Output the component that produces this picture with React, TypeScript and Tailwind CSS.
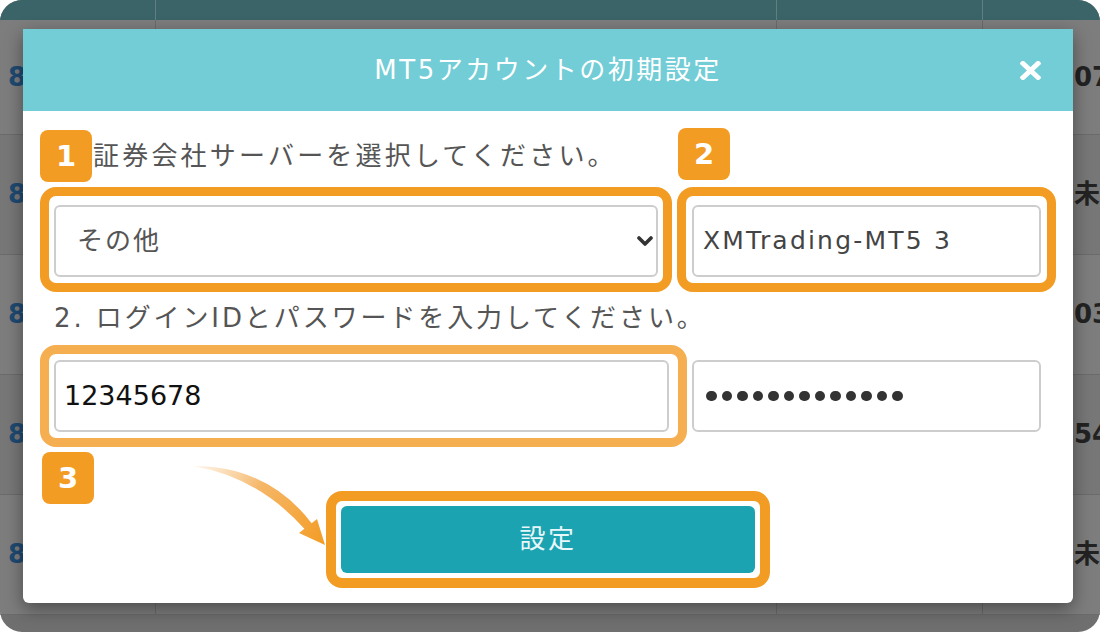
import React from "react";

const ROWS = [
  { left: "82", right: "07:14", tone: "bg-[#7d7d7d]" },
  { left: "83", right: "未決済", tone: "bg-[#777777]" },
  { left: "84", right: "03:52", tone: "bg-[#7d7d7d]" },
  { left: "85", right: "54:09", tone: "bg-[#777777]" },
  { left: "86", right: "未決済", tone: "bg-[#7d7d7d]" },
];

const Badge = ({ n }: { n: string }) => (
  <div className="w-[52px] h-[52px] shrink-0 rounded-[8px] bg-[#f39c24] flex items-center justify-center text-white font-bold text-[29px] leading-none font-['DejaVu_Sans',sans-serif]">
    {n}
  </div>
);

const Dots = ({ count }: { count: number }) => (
  <div className="flex gap-[5px]">
    {Array.from({ length: count }).map((_, i) => (
      <span key={i} className="block w-[10.5px] h-[10.5px] rounded-full bg-[#333333]" />
    ))}
  </div>
);

export default function App() {
  return (
    <div className="w-[1100px] h-[632px] bg-white font-['DejaVu_Sans','Noto_Sans_CJK_JP',sans-serif]">
      <div className="relative w-full h-full rounded-[22px] overflow-hidden bg-[#6f6f6f]">
        {/* table under the overlay */}
        <div className="flex h-[20px] bg-[#3a6467]">
          <div className="w-[156px] border-r border-[#5f7f81]" />
          <div className="w-[621px] border-r border-[#5f7f81]" />
          <div className="w-[206px] border-r border-[#5f7f81]" />
          <div className="flex-1" />
        </div>
        {ROWS.map((r, i) => (
          <div key={i} className={`flex border-b border-[#6b6b6b] ${r.tone} ${i === 0 ? "h-[115px]" : "h-[120px]"}`}>
            <div className="w-[156px] border-r border-[#6b6b6b] flex items-center pl-[8px] text-[26px] font-bold text-[#1f4a72]">
              {r.left}
            </div>
            <div className="w-[621px] border-r border-[#6b6b6b]" />
            <div className="w-[206px] border-r border-[#6b6b6b]" />
            <div className="flex-1 flex items-center pl-[91px] whitespace-nowrap overflow-hidden text-[26px] font-bold text-[#222222]">
              {r.right}
            </div>
          </div>
        ))}

        {/* dialog */}
        <div className="absolute left-[23px] top-[29px] w-[1050px] rounded-b-[6px] bg-white shadow-[0_6px_18px_rgba(0,0,0,0.4)]">
          <div className="grid grid-cols-[1fr_auto_1fr] items-center h-[82px] bg-[#72cdd6]">
            <div />
            <h2 className="text-white text-[26px] tracking-[2.5px] font-normal">MT5アカウントの初期設定</h2>
            <div className="flex justify-end pr-[32px]">
              <svg width="21" height="19" viewBox="0 0 21 19">
                <path d="M3 2.5 L18 16.5 M18 2.5 L3 16.5" stroke="white" strokeWidth="5" strokeLinecap="square" />
              </svg>
            </div>
          </div>

          <div className="px-[17px] pt-[19px]">
            <div className="grid grid-cols-[637px_379px]">
              <div className="flex items-center h-[52px]">
                <Badge n="1" />
                <span className="ml-[1px] whitespace-nowrap text-[26px] tracking-[3.2px] text-[#555555]">証券会社サーバーを選択してください。</span>
              </div>
              <div className="pl-[1px] -mt-[2px]">
                <Badge n="2" />
              </div>

              <div className="mt-[5px] w-[632px] border-[9px] border-[#f39c24] rounded-[16px] bg-white pt-[9px] px-[5px] pb-[6px]">
                <div className="h-[72px] rounded-[6px] border-2 border-[#cdcdcd] flex items-center pl-[21px] pr-[3px]">
                  <span className="flex-1 text-[26px] tracking-[2px] text-[#555555]">その他</span>
                  <svg width="16" height="11" viewBox="0 0 16 11">
                    <path d="M2 2 L8 8 L14 2" fill="none" stroke="#333333" strokeWidth="3.6" strokeLinecap="round" strokeLinejoin="round" />
                  </svg>
                </div>
              </div>
              <div className="mt-[5px] w-[379px] border-[9px] border-[#f39c24] rounded-[16px] bg-white pt-[9px] px-[6px] pb-[6px]">
                <div className="h-[72px] rounded-[6px] border-2 border-[#cdcdcd] flex items-center pl-[9px]">
                  <span className="text-[25px] tracking-[2.2px] text-[#444444]">XMTrading-MT5 3</span>
                </div>
              </div>
            </div>

            <div className="h-[53px] flex items-center pl-[14px]">
              <span className="whitespace-nowrap text-[26px] tracking-[2.9px] text-[#555555]">2. ログインIDとパスワードを入力してください。</span>
            </div>

            <div className="flex items-center">
              <div className="w-[647px] border-[9px] border-[#f5ae50] rounded-[16px] bg-white pt-[6px] pl-[5px] pr-[9px] pb-[6px]">
                <div className="h-[72px] rounded-[6px] border-2 border-[#cdcdcd] flex items-center pl-[8px]">
                  <span className="text-[27px] text-[#111111]">12345678</span>
                </div>
              </div>
              <div className="ml-[5px] w-[349px] h-[72px] rounded-[6px] border-2 border-[#cdcdcd] flex items-center pl-[12px]">
                <Dots count={13} />
              </div>
            </div>

            <div className="relative flex justify-center pt-[44px] pb-[15px]">
              <div className="absolute left-[2px] top-[5px]">
                <Badge n="3" />
              </div>
              <svg className="absolute left-0 top-0" width="400" height="150" viewBox="0 0 400 150">
                <defs>
                  <linearGradient id="arrowFade" x1="153" y1="19" x2="285" y2="98" gradientUnits="userSpaceOnUse">
                    <stop offset="0" stopColor="#f7c07a" stopOpacity="0.15" />
                    <stop offset="0.45" stopColor="#f4ae55" stopOpacity="0.9" />
                    <stop offset="1" stopColor="#f39c24" />
                  </linearGradient>
                </defs>
                <path
                  d="M153 19 Q228 19 271.6 76.2 L277 72 L285 98 L259 86 L264.4 81.8 Q218 30 153 19 Z"
                  fill="url(#arrowFade)"
                />
              </svg>
              <div className="w-[444px] border-[10px] border-[#f39c24] rounded-[16px] bg-white p-[5px]">
                <button className="w-full h-[67px] rounded-[6px] bg-[#1ca3b2] text-[#e8f7f9] text-[26px] tracking-[2.5px]">
                  設定
                </button>
              </div>
            </div>
          </div>
        </div>
      </div>
    </div>
  );
}
